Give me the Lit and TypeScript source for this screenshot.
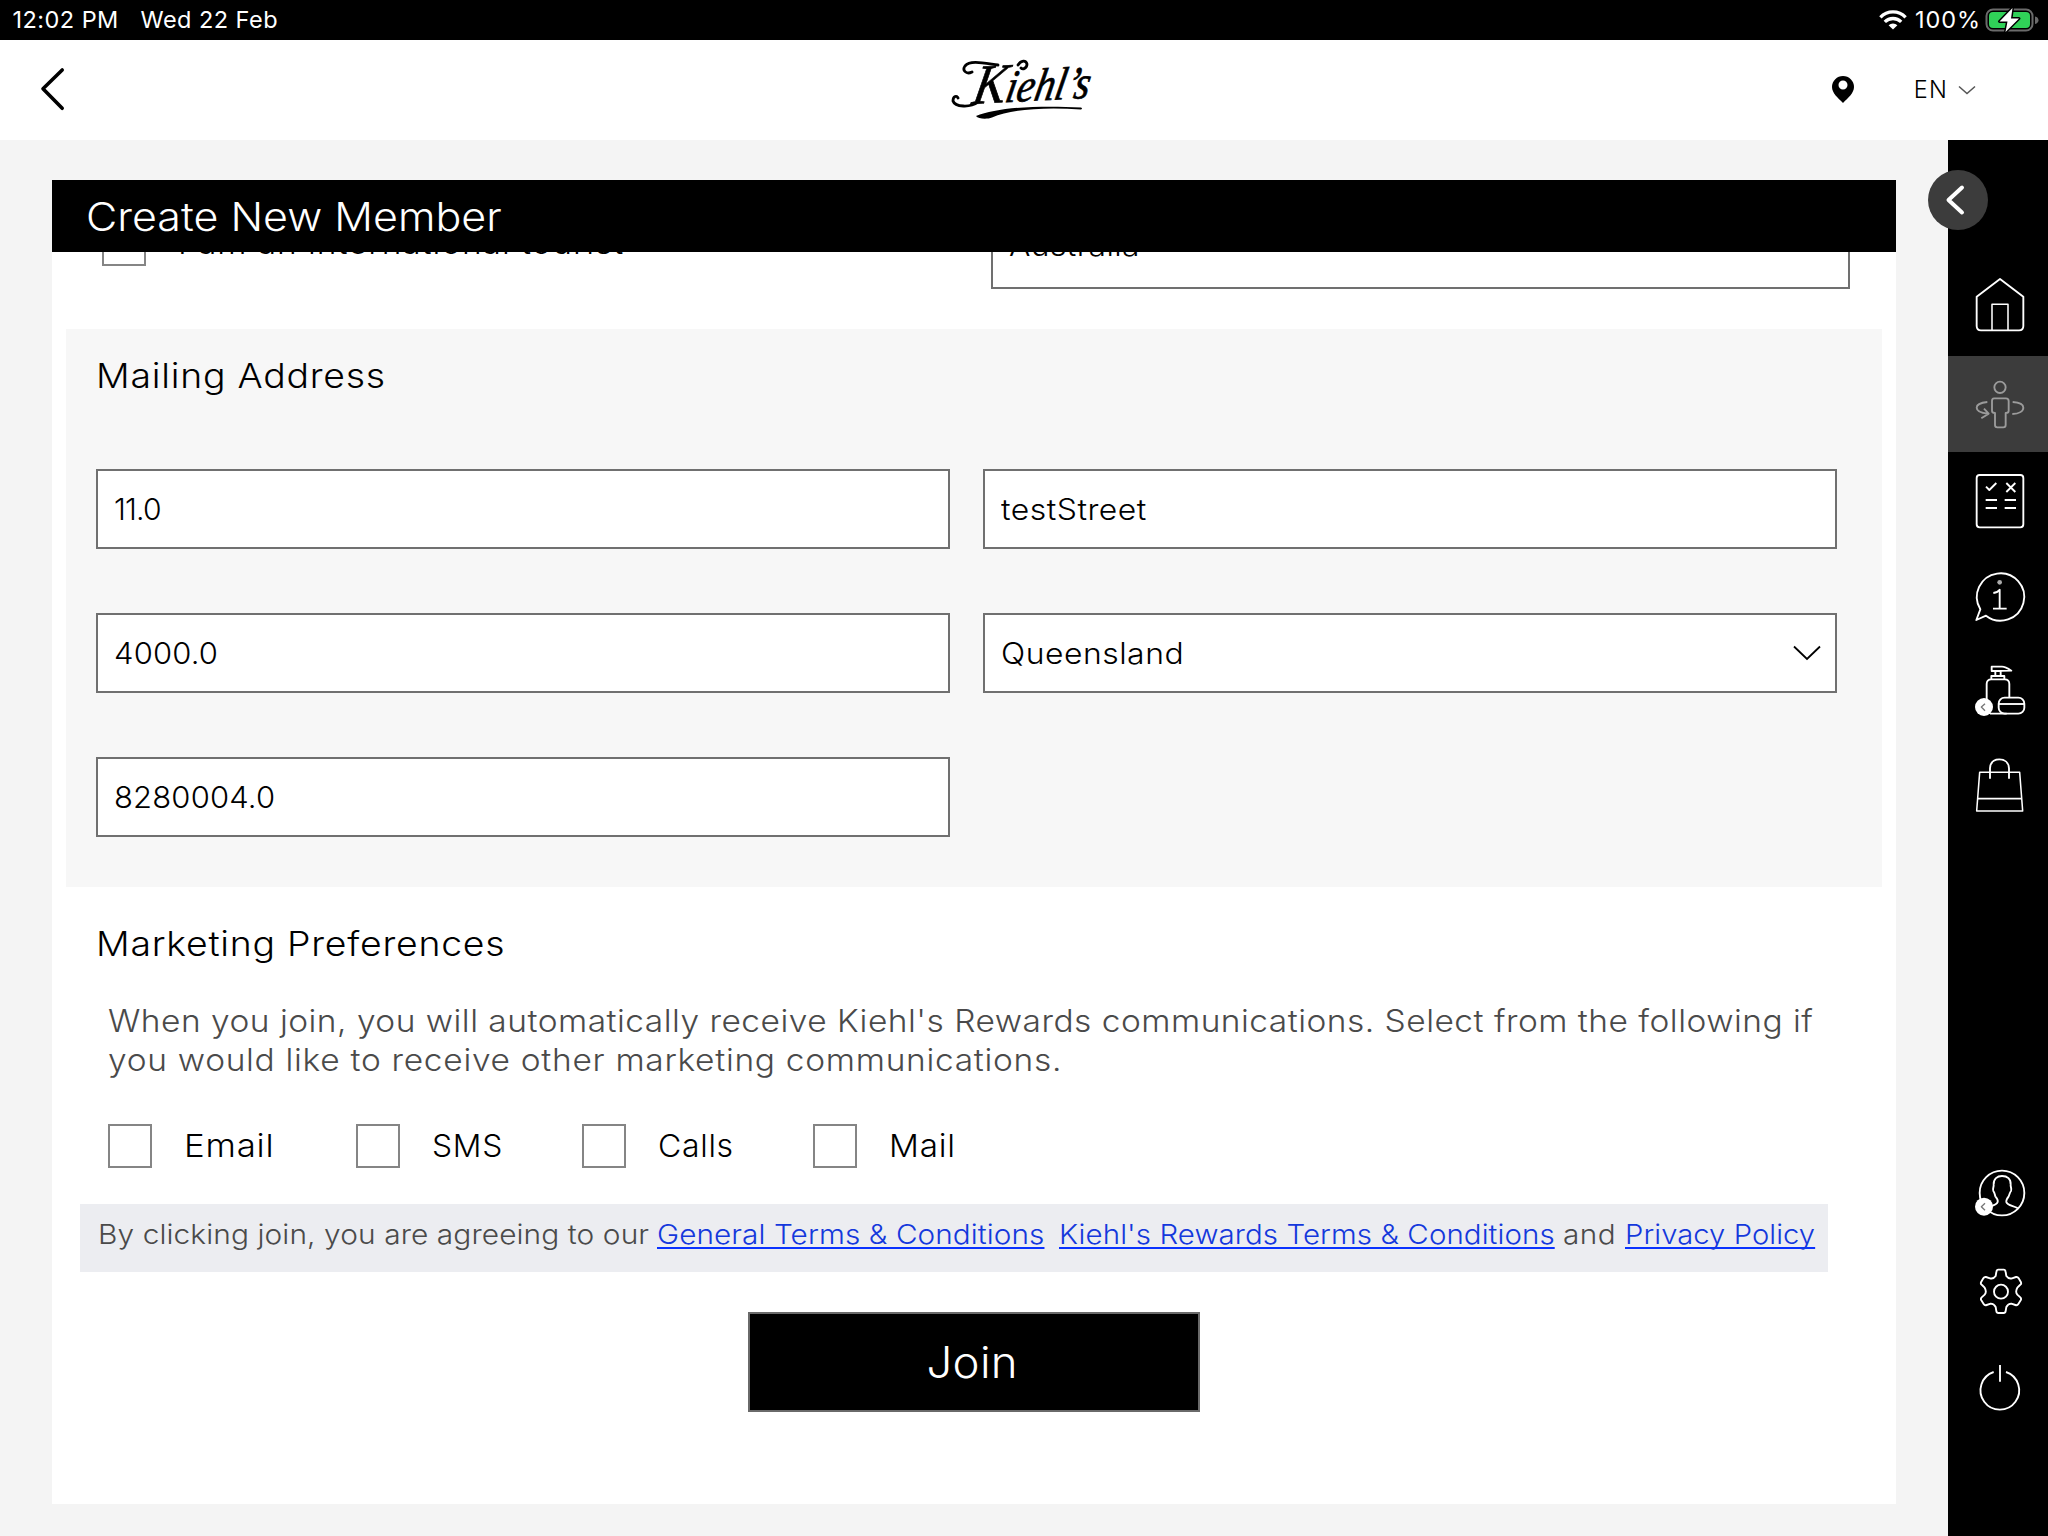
import { LitElement, html, svg, css } from "lit";
import { customElement } from "lit/decorators.js";

const homeIcon = svg`
  <path d="M180 57 110 110V198Q110 211 123 211H237Q250 211 250 198V110Z"/>
  <path class="thin" d="M156 210V133H204V210"/>`;

const personIcon = svg`
  <g class="dim">
    <circle cx="180" cy="382" r="17"/>
    <path d="M162 415H198Q206 415 206 423V452Q206 459 197 459V495Q197 502 190 502H172Q165 502 165 495V459Q156 459 156 452V423Q156 415 162 415Z"/>
    <path d="M142 426C120 428 110 436 110 443C110 452 124 459 144 461M132 446L146 461L124 475"/>
    <path d="M218 426C238 427 250 434 250 443C250 453 238 461 217 462"/>
  </g>`;

const checklistIcon = svg`
  <rect x="110" y="645" width="140" height="157" rx="9"/>
  <path d="M138 680 148 690 169 669M199 669 226 696M226 669 199 696M137 720H171M194 720H228M137 744H171M194 744H228"/>`;

const infoIcon = svg`
  <path d="M121 178A71 71 0 1 1 138 197L109 210Z"/>
  <circle class="dot" cx="179" cy="97" r="7"/>
  <path d="M160 129Q174 127 179 119V176M159 176H200"/>`;

const productIcon = svg`
  <path d="M155 350H186Q196 350 214 362L155 363ZM166 364V377M182 364V377M154 388V378H193V388"/>
  <path d="M140 450V402Q140 388 154 388H194Q208 388 208 402V441M150 491H200"/>
  <rect x="176" y="443" width="77" height="48" rx="18"/>
  <path d="M177 462H252"/>
  <circle class="badge" cx="132" cy="471" r="27"/>
  <path class="badge-mark" d="M135 461 124 471 135 482"/>`;

const bagIcon = svg`
  <path class="thin" d="M119 667H239L248 783H110Z"/>
  <path d="M114 746H246M150 686V655C151 637 162 628 178 628C194 628 206 637 207 655V686"/>`;

const profileIcon = svg`
  <circle cx="186" cy="129" r="67"/>
  <path d="M140 172C155 167 170 166 173 156C175 149 170 144 166 139C164 132 164 128 160 123C157 114 162 112 161 104C160 86 172 78 186 78C202 78 213 86 212 104C211 112 216 114 213 123C209 128 209 133 206 139C202 144 198 149 199 156C201 166 218 167 234 175"/>
  <circle class="badge" cx="132" cy="170" r="27"/>
  <path class="badge-mark" d="M135 160 124 170 135 181"/>`;

const settingsIcon = svg`
  <path d="M175 359H191Q196 359 197 366L199 378Q206 388 216 385L228 381Q233 380 236 385L243 397Q245 402 240 405L232 413Q225 425 232 434L241 442Q245 446 242 451L235 462Q232 467 226 465L214 461Q204 461 199 471L197 483Q196 489 191 489H175Q170 489 169 483L167 471Q162 461 152 461L140 465Q134 467 131 462L124 451Q121 446 125 442L134 434Q141 425 134 413L126 405Q121 402 123 397L130 385Q133 380 138 381L150 385Q160 388 167 378L169 366Q170 359 175 359Z"/>
  <circle cx="183" cy="425" r="21"/>`;

const powerIcon = svg`<path d="M161 666A58 58 0 1 0 198 666M180 645V695"/>`;

// Each entry pairs a viewBox with its drawing.
const mainNav = [
  { box: "24 0 300 288", art: homeIcon, active: false },
  { box: "24 288 300 288", art: personIcon, active: true },
  { box: "24 576 300 288", art: checklistIcon, active: false },
  { box: "24 -6 300 288", art: infoIcon, active: false },
  { box: "24 282 300 288", art: productIcon, active: false },
  { box: "24 570 300 288", art: bagIcon, active: false },
];
const footNav = [
  { box: "24 -12 300 288", art: profileIcon, active: false },
  { box: "24 276 300 288", art: settingsIcon, active: false },
  { box: "24 564 300 288", art: powerIcon, active: false },
];

@customElement("side-rail")
export class SideRail extends LitElement {
  static styles = css`
    :host {
      position: relative;
      width: 100px;
      flex: none;
      box-sizing: border-box;
      background: #000;
      padding: 120px 0 102px;
      display: flex;
      flex-direction: column;
      justify-content: space-between;
    }
    .item { height: 96px; }
    .active { background: #3c3c3c; }
    svg { display: block; fill: none; stroke: #fff; stroke-width: 5.6; stroke-linejoin: round; stroke-linecap: butt; }
    .item svg { width: 100px; height: 96px; }
    .thin { stroke-width: 4.6; }
    .dim { stroke: #9b9b9b; }
    .dot { fill: #aaa; stroke: none; }
    .badge { fill: #fff; stroke: none; }
    .badge-mark { stroke: #777; stroke-width: 4; }
    .toggle { position: absolute; left: -20px; top: 30px; width: 60px; height: 60px; border-radius: 50%; background: #3c3c3c; }
    .toggle svg { width: 60px; height: 60px; stroke-width: 4; stroke-linecap: round; }
  `;
  private group(items: typeof mainNav) {
    return html`<div>
      ${items.map((i) => html`<div class="item ${i.active ? "active" : ""}"><svg viewBox=${i.box}>${i.art}</svg></div>`)}
    </div>`;
  }
  render() {
    return html`${this.group(mainNav)}${this.group(footNav)}
      <div class="toggle"><svg viewBox="0 0 60 60"><path d="M34 17.5 20.5 30 34 42.5"/></svg></div>`;
  }
}

@customElement("app-header")
export class AppHeader extends LitElement {
  static styles = css`
    :host { display: block; }
    svg { display: block; }
    .status {
      height: 40px; box-sizing: border-box; padding: 0 15px 0 12.5px; background: #000; color: #fff;
      display: flex; align-items: center; font-size: 23.5px; line-height: 40px; white-space: pre;
      font-weight: 400; letter-spacing: 0.45px;
    }
    .clock { width: 128px; }
    .date { flex: 1; }
    .wifi { width: 28px; height: 22px; margin-right: 8px; }
    .level { letter-spacing: 0.9px; width: 64px; margin-right: 6px; }
    .battery { width: 54px; height: 28px; margin-right: -6px; }
    .bar {
      height: 100px; display: grid; grid-template-columns: 1fr 150px 1fr; align-items: center; background: #fff;
    }
    .back { width: 30px; height: 46px; margin: -2px 0 0 37px; }
    .logo { width: 150px; height: 70px; overflow: visible; }
    .word { font-family: "Liberation Serif", serif; font-style: italic; stroke: #000; stroke-width: 0.7px; }
    .tools { display: flex; align-items: center; justify-self: end; padding-right: 72px; margin-top: -1px; }
    .pin { width: 22px; height: 27px; margin-right: 60px; }
    .lang { font-size: 23.5px; font-weight: 300; letter-spacing: 1.2px; margin-right: 10px; }
    .chev { width: 18px; height: 12px; }
  `;
  render() {
    return html`
      <div class="status">
        <span class="clock">12:02 PM</span><span class="date">Wed 22 Feb</span>
        <svg class="wifi" viewBox="0 0 28 22" fill="none" stroke="#fff" stroke-width="3.3">
          <path d="M1.4 8.3A17.5 17.5 0 0 1 26.6 8.3M5.8 12.9A11.6 11.6 0 0 1 22.2 12.9"/>
          <path d="M14 20.6 9.6 16.2A6.4 6.4 0 0 1 18.4 16.2Z" fill="#fff" stroke="none"/>
        </svg>
        <span class="level">100%</span>
        <svg class="battery" viewBox="0 0 54 28">
          <rect x="1.5" y="3.5" width="46" height="21" rx="6.5" fill="none" stroke="#6b6b6b" stroke-width="2"/>
          <path d="M50 10.5V18Q53.5 17 53.5 14.2T50 10.5Z" fill="#6b6b6b"/>
          <rect x="4" y="6" width="41" height="16" rx="4" fill="#30d158"/>
          <path d="M27.5 2 14.5 15.5H22.5L20.5 26 34 12.5H26Z" fill="#fff" stroke="#000" stroke-width="3" paint-order="stroke" stroke-linejoin="round"/>
        </svg>
      </div>
      <div class="bar">
        <svg class="back" viewBox="0 0 30 46" fill="none" stroke="#000" stroke-width="3.6" stroke-linecap="round" stroke-linejoin="round">
          <path d="M25.2 4 6 22.7 25.2 42.3"/>
        </svg>
        <svg class="logo" viewBox="949 55 150 70">
          <text class="word" x="0" y="0" font-size="46" textLength="117" lengthAdjust="spacingAndGlyphs" transform="translate(971 104) rotate(-3) skewX(-14)"><tspan font-size="56">K</tspan>iehl’s</text>
          <path d="M972 72C966 75 962 70 965 66C970 60 983 63 998 65M978 102C970 108 955 107 953 101C953 96 957 95 958 98M1018 65C1021 60 1026 60 1027 64C1027 68 1023 70 1021 68" fill="none" stroke="#000" stroke-width="2.8" stroke-linecap="round"/>
          <path d="M976 116C996 108 1035 105 1081 107.500Q1083 108.500 1081 109.500C1045 107 1012 109 992 117.500C987 119.500 978 119 976 116Z"/>
        </svg>
        <div class="tools">
          <svg class="pin" viewBox="0 0 22 27"><path fill-rule="evenodd" d="M11 0A11 11 0 0 0 0 11C0 17 6 22 11 27C16 22 22 17 22 11A11 11 0 0 0 11 0ZM11 4.5A4.5 4.5 0 1 1 11 13.5A4.5 4.5 0 1 1 11 4.5Z"/></svg>
          <span class="lang">EN</span>
          <svg class="chev" viewBox="0 0 18 12" fill="none" stroke="#555" stroke-width="1.5"><path d="M1 2.5 9 9.5 17 2.5"/></svg>
        </div>
      </div>`;
  }
}

const addressFields = [
  { value: "11.0", kind: "ones" },
  { value: "testStreet", kind: "words" },
  { value: "4000.0", kind: "digits" },
  { value: "Queensland", kind: "words", select: true },
  { value: "8280004.0", kind: "digits" },
];

const channels = [
  { label: "Email", cls: "email" },
  { label: "SMS", cls: "sms" },
  { label: "Calls", cls: "calls" },
  { label: "Mail", cls: "mail" },
];

@customElement("member-form")
export class MemberForm extends LitElement {
  static styles = css`
    :host {
      display: flex; flex-direction: column; box-sizing: border-box;
      width: 1844px; height: 1324px; background: #fff; overflow: hidden; font-weight: 300; white-space: nowrap;
    }
    /* Widened letterforms */
    .w { display: inline-block; transform-origin: 0 50%; transform: scaleX(1.08); }
    .title {
      height: 72px; flex: none; background: #000; color: #fff; padding-left: 33.5px; box-sizing: border-box;
      font-size: 39.5px; line-height: 75px;
    }
    .title .w { transform: scaleX(1.088); }
    .body { flex: 1; overflow: hidden; }
    .scroll { margin-top: -43px; }
    .top { display: flex; height: 120px; align-items: flex-start; padding-left: 50px; }
    .check { width: 44px; height: 44px; box-sizing: border-box; border: 2px solid #858585; flex: none; background: #fff; }
    .top .check { margin-top: 13px; }
    .tourist { font-size: 31px; letter-spacing: 0.85px; line-height: 70px; margin: -1px 0 0 32px; width: 813px; }
    .field {
      height: 80px; box-sizing: border-box; border: 2px solid #707070; background: #fff; padding: 0 14px 0 16px;
      display: flex; align-items: center; justify-content: space-between; font-size: 29.5px; color: #000;
    }
    .country { width: 859px; letter-spacing: 0.35px; padding-bottom: 9px; }
    .words { letter-spacing: 0.48px; }
    .digits { letter-spacing: 0.15px; }
    .digits .w { transform: scaleX(1.05); }
    .ones { letter-spacing: -0.8px; }
    .ones .w { transform: scaleX(1.02); }
    .arrow { width: 28px; height: 16px; }
    .panel { margin: 0 14px; height: 558px; box-sizing: border-box; padding: 27px 45px 0 30px; background: #f7f7f7; }
    .heading { font-size: 34px; line-height: 40px; letter-spacing: 0.68px; color: #000; }
    .heading .w { transform: scaleX(1.1); }
    .grid { display: grid; grid-template-columns: 854px 854px; column-gap: 33px; row-gap: 64px; margin-top: 73px; }
    .prefs { padding: 37px 44px 0; }
    .note { margin: 37px 0 0 12px; font-size: 31px; line-height: 39px; color: #4a4a4a; letter-spacing: 0.45px; }
    .second { letter-spacing: 0.65px; }
    .checks { display: flex; margin: 45px 0 0 12px; }
    .choice { display: flex; align-items: center; font-size: 31.5px; color: #000; }
    .label { margin: -2px 0 0 32px; letter-spacing: 0.7px; }
    .email { width: 248px; }
    .email .w { transform: scaleX(1.105); }
    .sms { width: 226px; }
    .sms .w { transform: scaleX(1.01); }
    .calls { width: 231px; }
    .calls .w { transform: scaleX(1.015); }
    .mail .w { transform: scaleX(1.055); }
    .terms {
      margin: 36px 0 0 28px; width: 1748px; height: 68px; box-sizing: border-box; padding-left: 18px; background: #ecedf1;
      display: flex; font-size: 27.5px; line-height: 60px; color: #4a4a4a; letter-spacing: 0.08px;
    }
    .lead { width: 558.5px; }
    .lead .w { transform: scaleX(1.086); }
    .link {
      color: #1438dc; text-decoration: underline; text-decoration-color: #0a32ff;
      text-decoration-thickness: 2px; text-underline-offset: 3px; text-decoration-skip-ink: none;
    }
    .general { width: 402.5px; }
    .rewards { width: 504px; }
    .rewards .w { transform: scaleX(1.071); }
    .and { width: 62px; letter-spacing: 0.5px; }
    .privacy .w { transform: scaleX(1.06); }
    .join {
      display: flex; align-items: center; justify-content: center; box-sizing: border-box; width: 452px; height: 100px;
      margin: 40px 0 0 696px; padding-right: 4px; border: 2px solid #6a6a6a; background: #000; color: #fff;
      font-size: 43px; letter-spacing: 0.3px;
    }
    .join .w { transform-origin: 50% 50%; transform: scaleX(1.06); }
  `;
  render() {
    return html`
      <div class="title"><span class="w">Create New Member</span></div>
      <div class="body"><div class="scroll">
        <div class="top">
          <span class="check"></span><span class="tourist"><span class="w">I am an international tourist</span></span>
          <div class="field country"><span class="w">Australia</span></div>
        </div>
        <div class="panel">
          <div class="heading"><span class="w">Mailing Address</span></div>
          <div class="grid">
            ${addressFields.map((f) => html`<div class="field ${f.kind}"><span class="w">${f.value}</span>${f.select
              ? html`<svg class="arrow" viewBox="0 0 28 16" fill="none" stroke="#000" stroke-width="1.8"><path d="M1 1.5 14 14 27 1.5"/></svg>`
              : ""}</div>`)}
          </div>
        </div>
        <div class="prefs">
          <div class="heading"><span class="w">Marketing Preferences</span></div>
          <div class="note">
            <span class="w">When you join, you will automatically receive Kiehl's Rewards communications. Select from the following if</span><br>
            <span class="w second">you would like to receive other marketing communications.</span>
          </div>
          <div class="checks">
            ${channels.map((c) => html`<div class="choice ${c.cls}"><span class="check"></span><span class="label w">${c.label}</span></div>`)}
          </div>
        </div>
        <div class="terms">
          <span class="lead"><span class="w">By clicking join, you are agreeing to our</span></span>
          <span class="general"><a class="link w">General Terms &amp; Conditions</a></span>
          <span class="rewards"><a class="link w">Kiehl's Rewards Terms &amp; Conditions</a></span>
          <span class="and"><span class="w">and</span></span>
          <span class="privacy"><a class="link w">Privacy Policy</a></span>
        </div>
        <div class="join"><span class="w">Join</span></div>
      </div></div>`;
  }
}

@customElement("app-root")
export class AppRoot extends LitElement {
  static styles = css`
    :host {
      display: flex; flex-direction: column; width: 2048px; height: 1536px; overflow: hidden;
      background: #f4f4f4; font-family: Inter, "Open Sans", sans-serif; color: #000;
    }
    .main { flex: 1; display: flex; }
    .content { flex: 1; padding: 40px 0 0 52px; }
  `;
  render() {
    return html`<app-header></app-header>
      <div class="main"><div class="content"><member-form></member-form></div><side-rail></side-rail></div>`;
  }
}
